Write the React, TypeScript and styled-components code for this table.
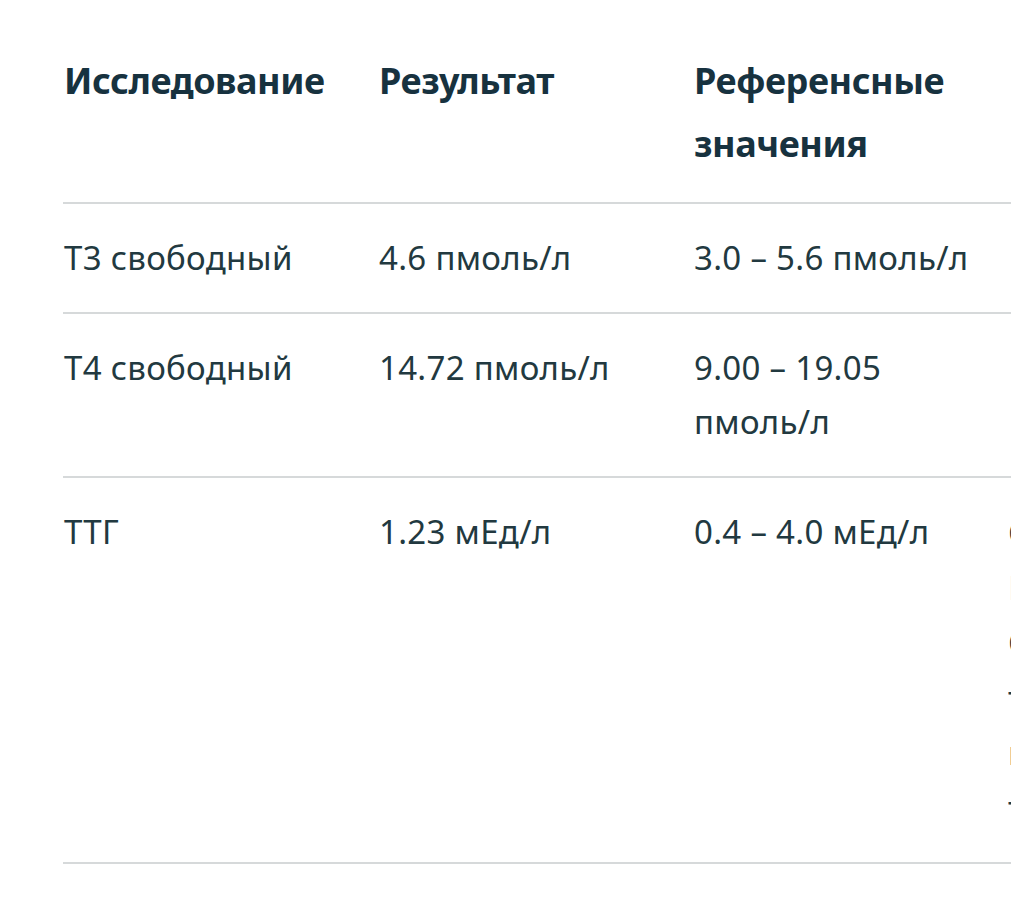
import React from "react";
import styled, { createGlobalStyle } from "styled-components";

const Global = createGlobalStyle`
  html, body {
    margin: 0;
    padding: 0;
    background: #ffffff;
    overflow: hidden;
  }
  body {
    font-family: "Noto Sans", "Open Sans", sans-serif;
  }
`;

const Page = styled.div`
  padding: 22px 0 0 63px;
  width: 1400px;
`;

const Table = styled.table`
  border-collapse: collapse;
  table-layout: fixed;
  width: 1260px;
`;

const Col = styled.col`
  width: 315px;
`;

const HeadCell = styled.th`
  text-align: left;
  vertical-align: top;
  padding: 27px 20px 27px 1px;
  font-size: 36px;
  line-height: 63px;
  font-weight: 700;
  color: #17323f;
  letter-spacing: -0.45px;
`;

const Row = styled.tr`
  border-top: 2px solid #d6d9da;
  &:last-child {
    border-bottom: 2px solid #d6d9da;
  }
`;

const Cell = styled.td`
  vertical-align: top;
  padding: 27px 16px 27px 1px;
  font-size: 33px;
  line-height: 54px;
  letter-spacing: 0.3px;
  color: #223940;
  font-weight: 400;
`;

const NoteCell = styled(Cell)`
  padding-left: 0;
  line-height: 55px;
`;

const Line = styled.span<{ $muted?: boolean }>`
  display: block;
  white-space: nowrap;
  color: ${(p) => (p.$muted ? "#a9bcc2" : "#223940")};
`;

export default function App() {
  return (
    <>
      <Global />
      <Page>
        <Table>
          <colgroup>
            <Col />
            <Col />
            <Col />
            <Col />
          </colgroup>
          <thead>
            <tr>
              <HeadCell>Исследование</HeadCell>
              <HeadCell>Результат</HeadCell>
              <HeadCell>Референсные значения</HeadCell>
              <HeadCell>Комментарий</HeadCell>
            </tr>
          </thead>
          <tbody>
            <Row>
              <Cell>Т3 свободный</Cell>
              <Cell>4.6 пмоль/л</Cell>
              <Cell>3.0 – 5.6 пмоль/л</Cell>
              <NoteCell></NoteCell>
            </Row>
            <Row>
              <Cell>Т4 свободный</Cell>
              <Cell>14.72 пмоль/л</Cell>
              <Cell>9.00 – 19.05 пмоль/л</Cell>
              <NoteCell></NoteCell>
            </Row>
            <Row>
              <Cell>ТТГ</Cell>
              <Cell>1.23 мЕд/л</Cell>
              <Cell>0.4 – 4.0 мЕд/л</Cell>
              <NoteCell>
                <Line>Оптимальный</Line>
                <Line $muted>Норма</Line>
                <Line>Определяет</Line>
                <Line>тиреоидный</Line>
                <Line>гормон</Line>
                <Line>тиреотропин</Line>
              </NoteCell>
            </Row>
          </tbody>
        </Table>
      </Page>
    </>
  );
}
